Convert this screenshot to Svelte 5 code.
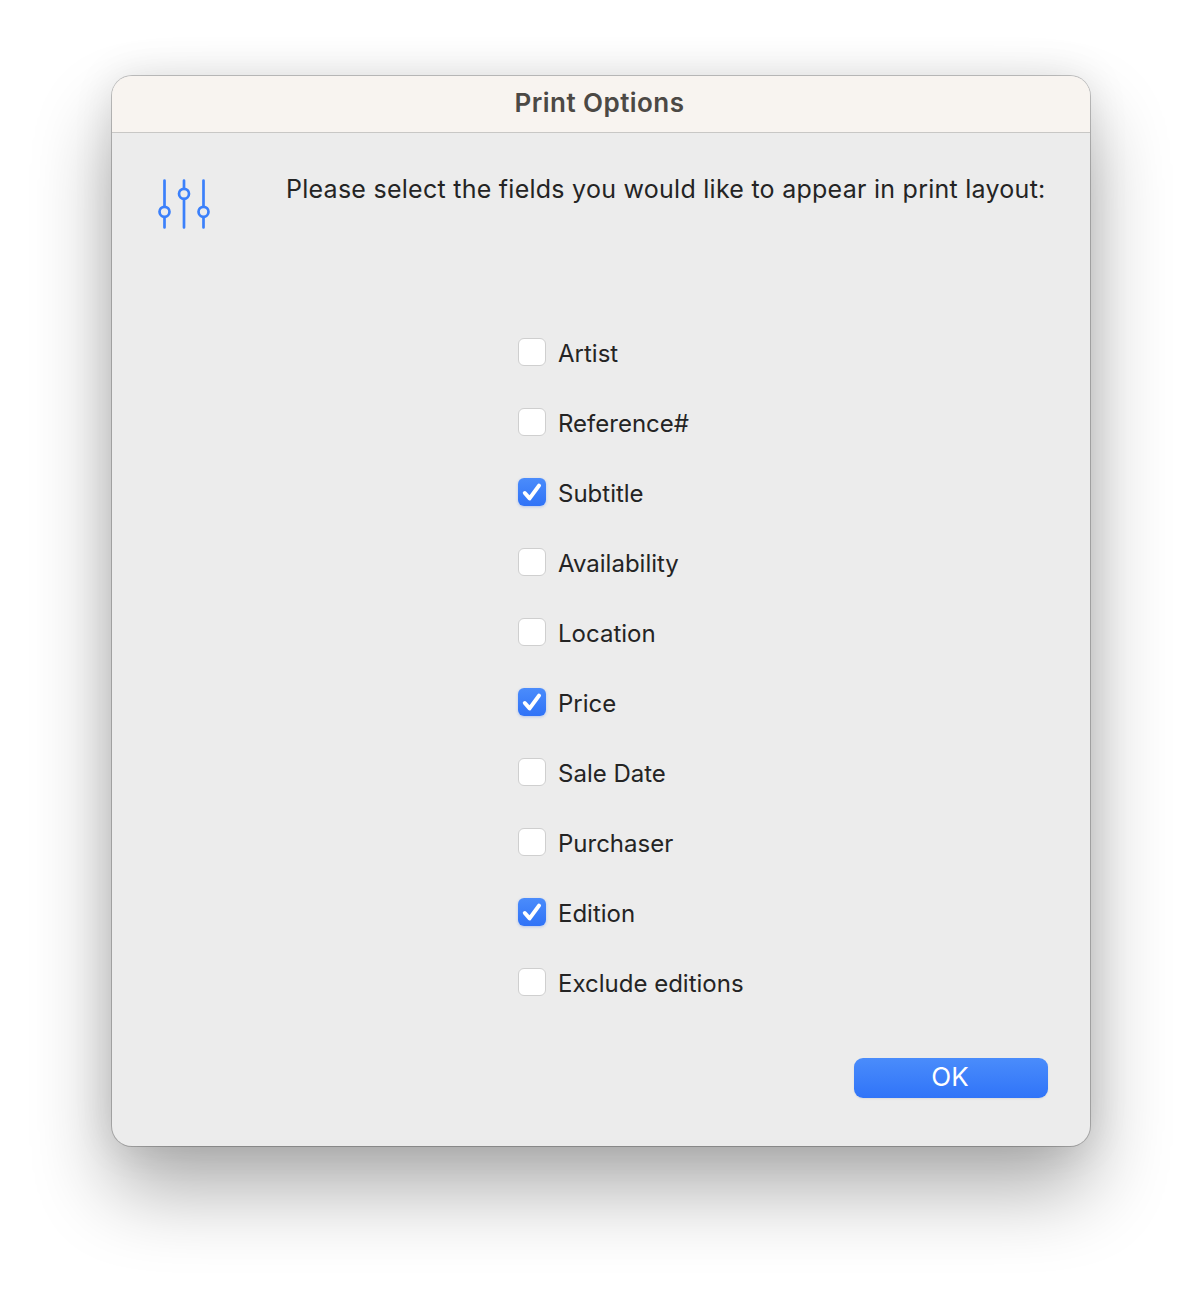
<script>
    const fields = [
        { name: 'Artist', on: false },
        { name: 'Reference#', on: false },
        { name: 'Subtitle', on: true },
        { name: 'Availability', on: false },
        { name: 'Location', on: false },
        { name: 'Price', on: true },
        { name: 'Sale Date', on: false },
        { name: 'Purchaser', on: false },
        { name: 'Edition', on: true },
        { name: 'Exclude editions', on: false }
    ];
</script>

<div class="page">
    <div class="window">
        <div class="titlebar">Print Options</div>
        <div class="body">
            <div class="top">
                <svg class="icon" width="52" height="50" viewBox="0 0 52 50" fill="none" stroke="#3b80fb" stroke-width="2.7" stroke-linecap="round">
                    <path d="M6.5 1.5V27M6.5 38.5V48.5" />
                    <circle cx="6.5" cy="32.8" r="5" />
                    <path d="M26 1.5V9M26 20V48.5" />
                    <circle cx="26" cy="14.8" r="5" />
                    <path d="M45.5 1.5V27M45.5 38.5V48.5" />
                    <circle cx="45.5" cy="32.8" r="5" />
                </svg>
                <p class="prompt">Please select the fields you would like to appear in print layout:</p>
            </div>
            <div class="list">
                {#each fields as f}
                    <div class="row">
                        <span class="box" class:on={f.on}>
                            {#if f.on}
                                <svg width="28" height="28" viewBox="0 0 28 28" fill="none" stroke="#fff" stroke-width="4" stroke-linecap="round" stroke-linejoin="round">
                                    <path d="M6.8 15L11.6 20.4L21 7.6" />
                                </svg>
                            {/if}
                        </span>
                        <span class="label">{f.name}</span>
                    </div>
                {/each}
            </div>
            <div class="actions">
                <button class="ok">OK</button>
            </div>
        </div>
    </div>
</div>

<style>
    :global(body) {
        background: #fff;
    }
    .page {
        width: 1202px;
        height: 1294px;
        padding: 76px 0 0 112px;
        box-sizing: border-box;
        overflow: hidden;
        font-family: Inter, "Liberation Sans", sans-serif;
    }
    .window {
        width: 978px;
        height: 1070px;
        box-sizing: border-box;
        display: flex;
        flex-direction: column;
        background: #ececec;
        border-radius: 20px;
        overflow: hidden;
        box-shadow: 0 0 0 1px rgba(0, 0, 0, 0.22), 0 44px 80px rgba(0, 0, 0, 0.32), 0 0 40px rgba(0, 0, 0, 0.1);
    }
    .titlebar {
        height: 57px;
        flex: none;
        box-sizing: border-box;
        background: #f8f4f0;
        border-bottom: 1px solid #c8c7c5;
        text-align: center;
        font-size: 26px;
        font-weight: 600;
        line-height: 54px;
        color: #4c4945;
        letter-spacing: 0.45px;
        padding-right: 3px;
    }
    .body {
        flex: 1;
        display: flex;
        flex-direction: column;
        padding: 46px 42px 48px 46px;
    }
    .top {
        display: flex;
        height: 159px;
    }
    .icon {
        flex: none;
    }
    .prompt {
        margin: -5px 0 0 76px;
        font-size: 25px;
        line-height: 30px;
        letter-spacing: 0.26px;
        color: #242424;
        white-space: nowrap;
    }
    .list {
        display: flex;
        flex-direction: column;
        gap: 42px;
        padding-left: 360px;
    }
    .row {
        display: flex;
        align-items: center;
        height: 28px;
    }
    .box {
        width: 28px;
        height: 28px;
        box-sizing: border-box;
        border-radius: 6px;
        background: #fff;
        border: 1px solid #cfcfcf;
        flex: none;
    }
    .box.on {
        border: 0;
        background: linear-gradient(#4b8cfb, #2f72f7);
        box-shadow: 0 1px 3px rgba(50, 110, 240, 0.3);
    }
    .box svg {
        display: block;
    }
    .label {
        margin-left: 12px;
        font-size: 24px;
        line-height: 30px;
        color: #242424;
        position: relative;
        top: 2px;
    }
    .actions {
        margin-top: auto;
        display: flex;
        justify-content: flex-end;
    }
    .ok {
        width: 194px;
        height: 40px;
        padding: 0 2px 2px 0;
        border: 0;
        border-radius: 9px;
        background: linear-gradient(#4a8cfb, #3074f8);
        box-shadow: 0 1px 2px rgba(0, 0, 0, 0.08);
        color: #fff;
        font-family: inherit;
        font-size: 26px;
        line-height: 36px;
    }
</style>
